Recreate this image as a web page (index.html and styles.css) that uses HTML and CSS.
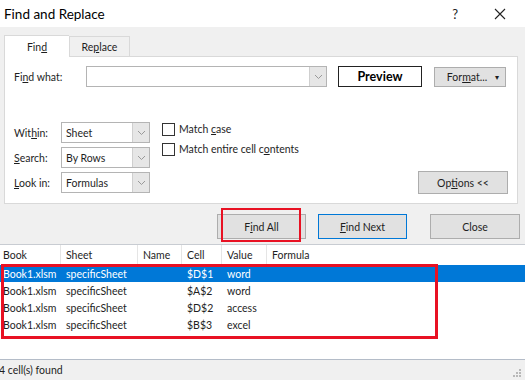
FILE: index.html
```html
<!DOCTYPE html>
<html>
<head>
<link rel="stylesheet" href="styles.css">
</head>
<body>
<div class="window">
  <div class="titlebar">
    <span class="title">Find and Replace</span>
    <span class="help">?</span>
    <svg class="close-x" width="12" height="12" viewBox="0 0 12 12">
      <path d="M1 1 L11 11 M11 1 L1 11" stroke="#222" stroke-width="1.1" fill="none"/>
    </svg>
  </div>

  <div class="dialog">
    <div class="tabs">
      <div class="tab active"><span>Fin<u>d</u></span></div>
      <div class="tab"><span>Re<u>p</u>lace</span></div>
    </div>

    <div class="panel">
      <div class="find-row">
        <span class="label find-label">Fi<u>n</u>d what:</span>
        <div class="combo combo-wide">
          <span class="combo-text"></span>
          <span class="drop"><svg width="9" height="6" viewBox="0 0 9 6"><path d="M1 1 L4.5 4.5 L8 1" stroke="#999" fill="none"/></svg></span>
        </div>
        <div class="btn preview">Preview</div>
        <div class="btn format"><span>For<u>m</u>at...</span><span class="caret">&#9662;</span></div>
      </div>

      <div class="opts-row">
        <div class="fields">
          <span class="label">Wit<u>h</u>in:</span>
          <div class="combo">
            <span class="combo-text">Sheet</span>
            <span class="drop"><svg width="9" height="6" viewBox="0 0 9 6"><path d="M1 1 L4.5 4.5 L8 1" stroke="#999" fill="none"/></svg></span>
          </div>
          <span class="label"><u>S</u>earch:</span>
          <div class="combo">
            <span class="combo-text">By Rows</span>
            <span class="drop"><svg width="9" height="6" viewBox="0 0 9 6"><path d="M1 1 L4.5 4.5 L8 1" stroke="#999" fill="none"/></svg></span>
          </div>
          <span class="label"><u>L</u>ook in:</span>
          <div class="combo">
            <span class="combo-text">Formulas</span>
            <span class="drop"><svg width="9" height="6" viewBox="0 0 9 6"><path d="M1 1 L4.5 4.5 L8 1" stroke="#999" fill="none"/></svg></span>
          </div>
        </div>

        <div class="checks">
          <div class="check"><span class="box"></span><span>Match <u>c</u>ase</span></div>
          <div class="check"><span class="box"></span><span>Match entire cell c<u>o</u>ntents</span></div>
        </div>

        <div class="btn options"><span>Op<u>t</u>ions &lt;&lt;</span></div>
      </div>
    </div>

    <div class="actions">
      <div class="btn-wrap">
        <div class="btn"><span>F<u>i</u>nd All</span></div>
        <div class="mark mark-btn"></div>
      </div>
      <div class="btn primary"><span><u>F</u>ind Next</span></div>
      <div class="btn close-btn">Close</div>
    </div>
  </div>

  <div class="results">
    <div class="row head">
      <span>Book</span><span>Sheet</span><span>Name</span><span>Cell</span><span>Value</span><span>Formula</span>
    </div>
    <div class="rows">
      <div class="row selected">
        <span>Book1.xlsm</span><span>specificSheet</span><span></span><span>$D$1</span><span>word</span><span></span>
      </div>
      <div class="row">
        <span>Book1.xlsm</span><span>specificSheet</span><span></span><span>$A$2</span><span>word</span><span></span>
      </div>
      <div class="row">
        <span>Book1.xlsm</span><span>specificSheet</span><span></span><span>$D$2</span><span>access</span><span></span>
      </div>
      <div class="row">
        <span>Book1.xlsm</span><span>specificSheet</span><span></span><span>$B$3</span><span>excel</span><span></span>
      </div>
      <div class="mark mark-rows"></div>
    </div>
  </div>

  <div class="status">
    <span>4 cell(s) found</span>
    <svg class="grip" width="10" height="10" viewBox="0 0 10 10">
      <rect x="7" y="1" width="2" height="2" fill="#b8b8b8"/>
      <rect x="4" y="4" width="2" height="2" fill="#b8b8b8"/>
      <rect x="7" y="4" width="2" height="2" fill="#b8b8b8"/>
      <rect x="1" y="7" width="2" height="2" fill="#b8b8b8"/>
      <rect x="4" y="7" width="2" height="2" fill="#b8b8b8"/>
      <rect x="7" y="7" width="2" height="2" fill="#b8b8b8"/>
    </svg>
  </div>
</div>
</body>
</html>
```

FILE: styles.css
```css
body {
  margin: 0;
  overflow: hidden;
  font-family: Lato, "Noto Sans", sans-serif;
  font-size: 10.5px;
  color: #1e1e1e;
}
.window {
  width: 525px;
  height: 380px;
  display: flex;
  flex-direction: column;
  background: #f0f0f0;
}
.titlebar {
  height: 27px;
  flex: none;
  background: #fff;
  display: flex;
  align-items: center;
  padding-left: 4px;
}
.title {
  font-size: 13.5px;
  color: #000;
  flex: 1;
}
.help {
  font-size: 13px;
  color: #222;
  margin-right: 36px;
}
.close-x {
  margin-right: 19px;
}

.dialog {
  height: 217px;
  flex: none;
  padding-top: 8px;
  box-sizing: border-box;
}
.tabs {
  display: flex;
  align-items: flex-end;
  height: 21px;
  margin-left: 4px;
  position: relative;
  z-index: 1;
}
.tab {
  height: 20px;
  width: 61px;
  box-sizing: border-box;
  border: 1px solid #d9d9d9;
  border-bottom: none;
  display: flex;
  align-items: center;
  justify-content: center;
  background: #f0f0f0;
}
.tab.active {
  width: 65px;
  height: 22px;
  margin-bottom: -1px;
  background: #fff;
  border-right: none;
}

.panel {
  margin: 0 7px 0 4px;
  height: 148px;
  box-sizing: border-box;
  background: #fff;
  border: 1px solid #d9d9d9;
  padding: 9px;
  display: flex;
  flex-direction: column;
}
.find-row {
  display: flex;
  align-items: center;
  height: 21px;
}
.find-label {
  width: 72px;
}
.label {
  white-space: nowrap;
}
.combo {
  height: 21px;
  box-sizing: border-box;
  border: 1px solid #b4b4b4;
  background: #fff;
  display: flex;
  align-items: stretch;
}
.combo-text {
  flex: 1;
  padding-left: 4px;
  display: flex;
  align-items: center;
}
.drop {
  width: 16px;
  background: #e6e6e6;
  border-left: 1px solid #cfcfcf;
  display: flex;
  align-items: center;
  justify-content: center;
}
.combo-wide {
  width: 241px;
}
.btn {
  height: 25px;
  box-sizing: border-box;
  border: 1px solid #adadad;
  background: #e1e1e1;
  display: flex;
  align-items: center;
  justify-content: center;
  white-space: nowrap;
}
.preview {
  margin-left: 11px;
  width: 84px;
  height: 21px;
  border: 1px solid #222;
  background: #fff;
  font-weight: bold;
  font-size: 12.5px;
  color: #000;
}
.format {
  margin-left: 12px;
  width: 72px;
  height: 20px;
  padding-left: 6px;
}
.caret {
  font-size: 8px;
  margin-left: 8px;
}

.opts-row {
  display: flex;
  margin-top: 35px;
  flex: 1;
}
.fields {
  display: grid;
  grid-template-columns: 47px 89px;
  grid-auto-rows: 21px;
  row-gap: 4px;
  align-items: center;
}
.fields .combo {
  width: 89px;
}
.checks {
  margin-left: 12px;
  display: flex;
  flex-direction: column;
  gap: 6px;
}
.check {
  display: flex;
  align-items: center;
  height: 14px;
}
.box {
  width: 13px;
  height: 13px;
  box-sizing: border-box;
  border: 1px solid #333;
  background: #fff;
  margin-right: 4px;
}
.options {
  margin-left: auto;
  align-self: flex-end;
  width: 90px;
  height: 23px;
}

.actions {
  display: flex;
  justify-content: flex-end;
  margin-top: 10px;
  padding-right: 5px;
}
.actions .btn {
  width: 89px;
}
.btn-wrap {
  position: relative;
}
.primary {
  margin-left: 12px;
  border-color: #0078d7;
}
.actions .close-btn {
  margin-left: 23px;
  width: 90px;
}
.mark {
  position: absolute;
  border: 2px solid #e81123;
}
.mark-btn {
  left: 4px;
  top: -6px;
  width: 80px;
  height: 34px;
  box-sizing: border-box;
}

.results {
  height: 115px;
  flex: none;
  box-sizing: border-box;
  border-top: 1px solid #c8ccd2;
  background: #fff;
}
.row {
  display: grid;
  grid-template-columns: 61px 77px 44px 40px 45px 1fr;
  height: 17px;
  align-items: center;
  white-space: nowrap;
}
.row span {
  padding-left: 5px;
}
.row span:first-child {
  padding-left: 3px;
}
.row.head {
  height: 19px;
  margin-bottom: 1px;
}
.row.head span {
  border-right: 1px solid #e5e5e5;
  height: 100%;
  display: flex;
  align-items: center;
  box-sizing: border-box;
}
.row.head span:last-child {
  border-right: none;
}
.row.selected {
  background: #0078d7;
  color: #fff;
}
.rows {
  position: relative;
}
.mark-rows {
  left: 1px;
  top: -1px;
  width: 437px;
  height: 75px;
  box-sizing: border-box;
  border-width: 3px;
}

.status {
  flex: 1;
  border-top: 1px solid #b4bcc8;
  display: flex;
  align-items: center;
  justify-content: space-between;
  padding-right: 3px;
}
.status span {
  margin-left: -1px;
}
.grip {
  align-self: flex-end;
  margin-bottom: 2px;
}
```
